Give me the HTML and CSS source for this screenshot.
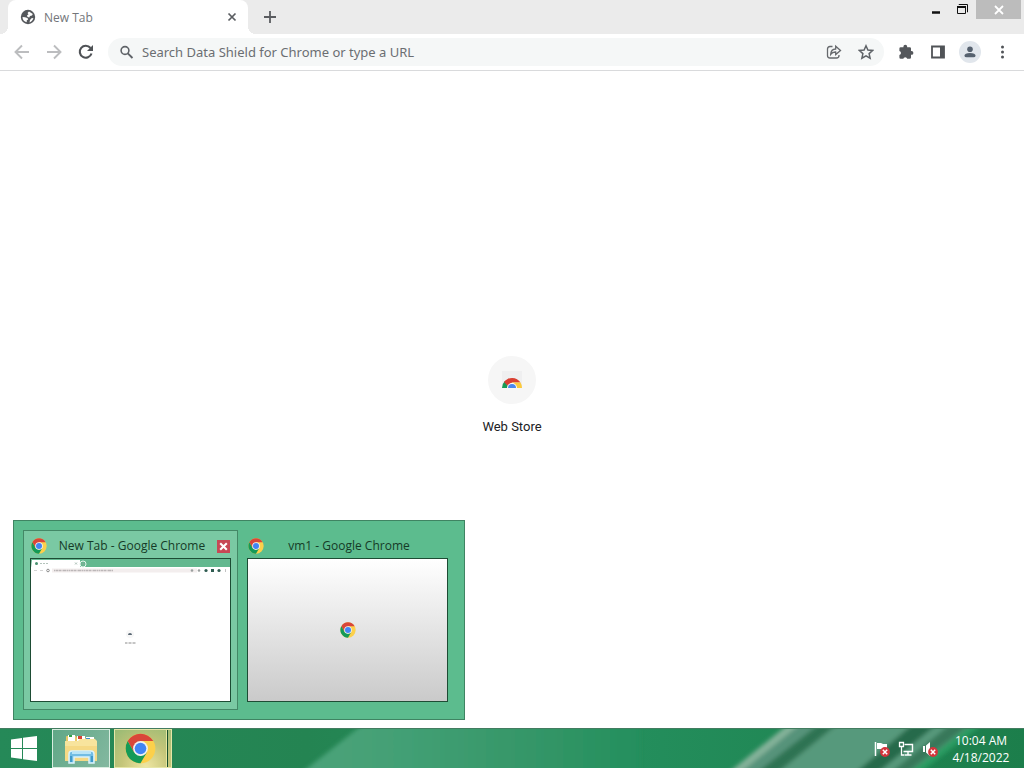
FILE: index.html
```html
<!DOCTYPE html>
<html lang="en">
<head>
<meta charset="utf-8">
<meta name="viewport" content="width=device-width, initial-scale=1">
<title>New Tab</title>
<link rel="stylesheet" href="styles.css">
</head>
<body>
<svg class="defs" aria-hidden="true">
  <symbol id="chrome" viewBox="0 0 48 48">
    <circle cx="24" cy="24" r="23" fill="#fcd04b"/>
    <path d="M4.100 12.500A23 23 0 0 1 43.900 12.500H24L14 29.700Z" fill="#d9463a"/>
    <path d="M4.100 12.500 14 29.700 24 35.500 34 29.700 24 47A23 23 0 0 1 4.100 12.500Z" fill="#149a57"/>
    <circle cx="24" cy="24" r="11.500" fill="#f1f1f1"/>
    <circle cx="24" cy="24" r="9" fill="#4285f4"/>
  </symbol>
  <symbol id="error" viewBox="0 0 10 10">
    <circle cx="5" cy="5" r="4.900" fill="#d3353c"/>
    <path d="m2.800 2.800 4.400 4.400M7.200 2.800 2.800 7.200" stroke="#fff" stroke-width="1.500"/>
  </symbol>
</svg>

<header class="browser">
  <div class="tabstrip">
    <div class="tab">
      <svg class="tab-icon" viewBox="0 0 16 16"><circle cx="8" cy="8" r="7.200" fill="#55585c"/><path d="M9 2.500 12.800 5 12 6.500 10 7 9.300 8.500 7.500 8 7 6.500 8.500 5.200 7.500 4Z" fill="#fff"/><path d="M2.500 8 5 8.300 7.500 9 8.200 10.500 6.800 11.300 6.700 13.300C4.200 12.700 2.500 10.700 2.500 8ZM10 11 11.500 9.300 13.400 9C12.900 11.200 11.500 12.800 9.500 13.400Z" fill="#fff"/></svg>
      <span class="tab-title">New Tab</span>
      <button class="icon-btn tab-close" aria-label="Close tab"><svg viewBox="0 0 10 10"><path d="m1.500 1.500 7 7M8.500 1.500 1.500 8.500" stroke="#5a5d61" stroke-width="1.700"/></svg></button>
    </div>
    <button class="icon-btn new-tab" aria-label="Open new tab"><svg viewBox="0 0 12 12"><path d="M6 0v12M0 6h12" stroke="#5a5c60" stroke-width="1.800"/></svg></button>
    <div class="window-controls">
      <button class="icon-btn minimize" aria-label="Minimize"><svg viewBox="0 0 12 12"><path d="M1 8.500h8" stroke="#111" stroke-width="2.500"/></svg></button>
      <button class="icon-btn restore" aria-label="Restore"><svg viewBox="0 0 12 12"><path d="M2 1V.5h8.500V8H10" fill="none" stroke="#111"/><path d="M.5 2.500h8v7h-8Z" fill="none" stroke="#111"/><path d="M0 3h9" stroke="#111" stroke-width="2"/></svg></button>
      <button class="icon-btn window-close" aria-label="Close window"><svg viewBox="0 0 10 10"><path d="m1 1 8 8M9 1 1 9" stroke="#fff" stroke-width="1.800"/></svg></button>
    </div>
  </div>
  <div class="toolbar">
    <button class="icon-btn tool" aria-label="Back"><svg viewBox="0 0 16 16"><path d="M15 8H2M8 1.500 1.500 8 8 14.500" fill="none" stroke="#bcbdbf" stroke-width="1.900"/></svg></button>
    <button class="icon-btn tool" aria-label="Forward"><svg viewBox="0 0 16 16"><path d="M1 8h13M8 1.500 14.500 8 8 14.500" fill="none" stroke="#bcbdbf" stroke-width="1.900"/></svg></button>
    <button class="icon-btn tool" aria-label="Reload"><svg viewBox="0 0 16 16"><path d="M13.500 9.500A6 6 0 1 1 12.500 4" fill="none" stroke="#4f5256" stroke-width="2.100"/><path d="M15 1v6H9Z" fill="#4f5256"/></svg></button>
    <div class="omnibox">
      <svg class="search-icon" viewBox="0 0 14 14"><circle cx="5" cy="5.500" r="3.900" fill="none" stroke="#5f6368" stroke-width="1.600"/><path d="m7.800 8.300 4.700 4.700" stroke="#5f6368" stroke-width="1.900"/></svg>
      <input class="address" type="text" aria-label="Address and search bar" placeholder="Search Data Shield for Chrome or type a URL">
      <button class="icon-btn tool" aria-label="Share"><svg viewBox="0 0 16 16"><path d="M6.500 2.500H4Q1.500 2.500 1.500 5v6.500Q1.500 14 4 14h6.500q2.500 0 2.500-2.500V11M4.700 10.300Q5 5.200 9.700 5V2.300L14.500 6.500 9.700 10.500V8Q6.500 7.800 4.700 10.300Z" fill="none" stroke="#66696d" stroke-width="1.300"/></svg></button>
      <button class="icon-btn tool" aria-label="Bookmark this tab"><svg viewBox="0 0 16 16"><path d="m8 1.800 1.900 4.300 4.700.4-3.500 3.100 1 4.600L8 11.800l-4.100 2.400 1-4.600L1.400 6.500l4.700-.4Z" fill="none" stroke="#5f6368" stroke-width="1.500"/></svg></button>
    </div>
    <button class="icon-btn tool" aria-label="Extensions"><svg viewBox="0 0 16 16"><path d="M5.400 3.200V2.700a1.900 1.900 0 0 1 3.800 0v.5h2.500q1.300 0 1.300 1.300V7h.5a1.900 1.900 0 0 1 0 3.800H13v2.600q0 1.300-1.300 1.300H9.200a2 2 0 0 0-3.900 0H2.700q-1.300 0-1.300-1.300V11a2.050 2.050 0 0 0 0-4V4.500q0-1.300 1.300-1.300Z" fill="#54575b"/></svg></button>
    <button class="icon-btn tool" aria-label="Side panel"><svg viewBox="0 0 16 16"><path d="M2 2.500h12v11H2Z" fill="#fff" stroke="#505357" stroke-width="1.800"/><path d="M10 2h4v12h-4Z" fill="#505357"/></svg></button>
    <button class="icon-btn tool profile" aria-label="Profile"><svg viewBox="0 0 16 16"><circle cx="8" cy="4.800" r="3.200" fill="#56616f"/><path d="M1.500 14v-1.500Q1.800 9.300 8 9.200q6.200.1 6.500 3.300V14Z" fill="#56616f"/></svg></button>
    <button class="icon-btn tool" aria-label="Menu"><svg viewBox="0 0 16 16"><g fill="#505357"><circle cx="8.500" cy="3" r="1.500"/><circle cx="8.500" cy="8" r="1.500"/><circle cx="8.500" cy="13" r="1.500"/></g></svg></button>
  </div>
</header>

<main class="page">
  <a class="shortcut" href="#">
    <span class="shortcut-icon"><svg viewBox="0 0 24 24"><path d="M2 3h20v17H2Z" fill="#efeff0"/><path d="M2 20a10 10 0 0 1 2.800-7L9 20Z" fill="#169b55"/><path d="M4 14A10 10 0 0 1 20.500 14.500H12L8 18Z" fill="#d93f32"/><path d="M12 14.500h8.500A10 10 0 0 1 22 20h-6Z" fill="#fbc93d"/><path d="M7 20a5 5 0 0 1 10 0Z" fill="#fff"/><path d="M8 20a4 4 0 0 1 8 0Z" fill="#4b87ee"/></svg></span>
    <span class="shortcut-label">Web Store</span>
  </a>
</main>

<footer class="taskbar">
  <svg class="wallpaper" viewBox="0 0 1024 40" preserveAspectRatio="none" aria-hidden="true">
    <defs>
      <linearGradient id="base"><stop offset="0" stop-color="#258958"/><stop offset=".3" stop-color="#248452"/><stop offset=".6" stop-color="#248f5d"/><stop offset="1" stop-color="#1c7e4b"/></linearGradient>
      <linearGradient id="beam"><stop offset="0" stop-color="#4da37a"/><stop offset=".3" stop-color="#43a075"/><stop offset=".65" stop-color="#369769"/><stop offset="1" stop-color="#248f5d"/></linearGradient>
      <filter id="soft" x="-5%" y="-50%" width="110%" height="200%"><feGaussianBlur stdDeviation="2"/></filter>
    </defs>
    <path d="M0 0h1024v40H0Z" fill="url(#base)"/>
    <g filter="url(#soft)">
      <path d="M371-10h269v60H295Z" fill="url(#beam)"/>
      <path d="M802-10h188l-84 60H726Z" fill="#57997c"/>
      <path d="M796-10h12l-74 60h-12Z" fill="#84b29a"/>
      <path d="M808-10h17l-74 60h-17Z" fill="#56937a"/>
      <path d="M827-10h18l-74 60h-21Z" fill="#2e7352"/>
      <path d="M920-10h25l-74 60h-22Z" fill="#286b4c"/>
      <path d="M958-10h20l-78 60h-16Z" fill="#38785a"/>
      <path d="M980-10h11l-78 60h-11Z" fill="#299b62"/>
    </g>
    <path d="M0 .5h1024" stroke="#437c60"/>
  </svg>
  <button class="start" aria-label="Start"><svg viewBox="0 0 26 25"><path d="m0 3.500 11-1.600v10.100H0ZM12 1.800 26 0v12H12ZM0 13h11v10L0 21.500ZM12 13h14v12l-14-1.800Z" fill="#fff"/></svg></button>
  <button class="task explorer" aria-label="File Explorer">
    <svg viewBox="0 0 34 30"><path d="M2 3q0-1 1-1h9l1 2h16q2 0 2 2v19H2Z" fill="#e9c867"/><path d="M4 1h7v6H4ZM13 2h8v6h-8ZM22 3h8v5h-8Z" fill="#fff"/><path d="M5 1h3v2H5Z" fill="#35a347"/><path d="M14 2h4v3h-4Z" fill="#d84132"/><path d="M22 4h4v2h-4Z" fill="#3c8fd1"/><path d="M1 7h13l2-2h15l2 2v20H1Z" fill="#f8e49d"/><path d="M1 12h32v15H1Z" fill="#f5d985"/><path d="M5 20q0-3 3-3h19q3 0 3 3v9h-5v-6H10v6H5Z" fill="#72bde4" stroke="#d9f2fc" stroke-width="1.500"/><path d="M8 19h19" stroke="#b9e5f7" stroke-width="2"/><path d="M7 22v6M28 22v6" stroke="#318dc1" stroke-width="1.500"/></svg>
  </button>
  <button class="task chrome-task" aria-label="Google Chrome, 2 windows"><svg viewBox="0 0 48 48"><use href="#chrome"/></svg></button>
  <div class="tray">
    <button class="icon-btn tray-btn" aria-label="Action Center"><svg viewBox="0 0 16 16"><path d="M1.500 1v14" stroke="#fff" stroke-width="1.500"/><path d="M3 2h4l2 1h4v6H9L7 8H3Z" fill="#fff"/><use href="#error" x="6" y="6" width="10" height="10"/></svg></button>
    <button class="icon-btn tray-btn" aria-label="Network"><svg viewBox="0 0 16 16"><path d="M6.500 3.500h8v7h-9M10 11v3M6.500 14h7" fill="none" stroke="#fff" stroke-width="1.400"/><path d="M1.500 1.500h4v4h-4ZM3.500 6v8H6" fill="#36785a" stroke="#fff" stroke-width="1.300"/></svg></button>
    <button class="icon-btn tray-btn" aria-label="Volume muted"><svg viewBox="0 0 16 16"><path d="M1 5h2v6H1ZM4 4.500 8 1v14l-4-3.500Z" fill="#fff"/><use href="#error" x="6" y="6" width="10" height="10"/></svg></button>
  </div>
  <button class="clock"><time>10:04 AM</time><time>4/18/2022</time></button>

  <section class="previews" aria-label="Google Chrome windows">
    <article class="preview active">
      <div class="preview-head">
        <svg class="preview-icon"><use href="#chrome"/></svg>
        <span class="preview-title">New Tab - Google Chrome</span>
        <button class="icon-btn preview-close" aria-label="Close New Tab"><svg viewBox="0 0 10 10"><path d="m2 2 6 6M8 2 2 8" stroke="#fff" stroke-width="1.900"/></svg></button>
      </div>
      <div class="thumb">
        <svg viewBox="0 0 199 142" aria-hidden="true">
          <path d="M0 0h199v8H0Z" fill="#63b88f"/><path d="M1 1h48v8H0Z" fill="#fff"/><circle cx="52" cy="5" r="3" fill="#63b88f" stroke="#e4f4ec"/>
          <circle cx="5.500" cy="4.500" r="1.500" fill="#47906f"/><path d="M9 4.500h9" stroke="#b4c4bc" stroke-dasharray="2 1"/><path d="m44 3.500 2 2m0-2-2 2M50.500 5h3M52 3.500v3" stroke="#91aa9d" stroke-width=".7"/>
          <path d="M21 11.500h145" stroke="#f3eeee" stroke-width="4"/>
          <path d="M3 11.500h3M9 11.500h3" stroke="#d3d3d3"/><circle cx="17" cy="11.500" r="1.300" fill="none" stroke="#8b8b8b"/>
          <path d="M23 11.500h59" stroke="#bcb7b8" stroke-width="1.500" stroke-dasharray="1 .5 3 .5 2 .5"/>
          <g fill="#9ba09f"><circle cx="161" cy="11.500" r="1.300"/><circle cx="168" cy="11.500" r="1.300"/></g><g fill="#2f5c51"><circle cx="175" cy="11.500" r="1.600"/><path d="M180 10h3v3h-3Z"/><circle cx="188" cy="11.500" r="1.600"/></g><path d="M194.500 10v3" stroke="#999" stroke-width=".6"/>
          <circle cx="99" cy="75" r="4" fill="#f7f7f7"/><path d="M97 76a2 2 0 0 1 4 0Z" fill="#596773"/><path d="M94 84h11" stroke="#8b8b8b" stroke-dasharray="2 .5 1 .5"/>
        </svg>
      </div>
    </article>
    <article class="preview">
      <div class="preview-head">
        <svg class="preview-icon"><use href="#chrome"/></svg>
        <span class="preview-title">vm1 - Google Chrome</span>
        <span class="preview-spacer"></span>
      </div>
      <div class="thumb blank"><svg class="thumb-logo"><use href="#chrome"/></svg></div>
    </article>
  </section>
</footer>
</body>
</html>
```

FILE: styles.css
```css
* { box-sizing: border-box; }

body {
  margin: 0;
  min-height: 100vh;
  display: flex;
  flex-direction: column;
  background: #fff;
  font-family: "Open Sans", "Noto Sans", sans-serif;
}

button { font: inherit; color: inherit; border: 0; padding: 0; background: none; }
svg { display: block; }
.defs { position: absolute; width: 0; height: 0; }

.icon-btn { display: flex; align-items: center; justify-content: center; flex: none; }

/* Tab strip */
.tabstrip { display: flex; height: 34px; padding-left: 8px; background: #ebebeb; }
.tab {
  position: relative;
  display: flex;
  align-items: center;
  gap: 8px;
  width: 240px;
  padding: 0 8px 0 12px;
  border-radius: 8px 8px 0 0;
  background: #fff;
}
.tab::before, .tab::after {
  content: "";
  position: absolute;
  bottom: 0;
  width: 8px;
  height: 8px;
}
.tab::before { right: 100%; background: radial-gradient(circle at 0 0, transparent 8px, #fff 8px); }
.tab::after { left: 100%; background: radial-gradient(circle at 100% 0, transparent 8px, #fff 8px); }
.tab-icon { width: 16px; height: 16px; }
.tab-title { flex: 1; font-size: 12px; color: #73767a; }
.tab-close { width: 16px; height: 16px; }
.tab-close svg { width: 10px; height: 10px; }
.new-tab { width: 28px; margin-left: 8px; }
.new-tab svg { width: 12px; height: 12px; }
.window-controls { display: flex; margin-left: auto; height: 19px; padding-right: 3px; }
.minimize, .restore { width: 26px; }
.minimize svg, .restore svg { width: 12px; height: 12px; }
.window-close { width: 45px; background: #bcbcbc; }
.window-close svg { width: 10px; height: 10px; }

/* Toolbar */
.toolbar {
  display: flex;
  align-items: center;
  gap: 4px;
  height: 37px;
  padding: 0 8px;
  border-bottom: 1px solid #d9dadc;
  background: #fff;
}
.tool { width: 28px; height: 28px; }
.tool svg { width: 16px; height: 16px; }
.omnibox {
  flex: 1;
  display: flex;
  align-items: center;
  gap: 4px;
  min-width: 0;
  height: 28px;
  margin: 0 4px;
  padding: 0 4px 0 12px;
  border-radius: 14px;
  background: #f5f7f7;
}
.search-icon { width: 14px; height: 14px; }
.address {
  flex: 1;
  min-width: 0;
  border: 0;
  padding: 0 4px;
  background: none;
  font: 13px/20px "Noto Sans", sans-serif;
}
.address::placeholder { color: #6b6e72; opacity: 1; }
.profile svg { width: 22px; height: 22px; padding: 4px; border-radius: 50%; background: #e1e6ec; }

/* New tab page */
.page {
  flex: 1;
  display: flex;
  align-items: center;
  justify-content: center;
  padding-bottom: 8px;
}
.shortcut {
  display: flex;
  flex-direction: column;
  align-items: center;
  gap: 14px;
  color: #202124;
  text-decoration: none;
}
.shortcut-icon {
  display: flex;
  align-items: center;
  justify-content: center;
  width: 48px;
  height: 48px;
  border-radius: 50%;
  background: #f6f6f6;
}
.shortcut-icon svg { width: 24px; height: 24px; }
.shortcut-label { font: 13px/18px Roboto, sans-serif; }

/* Taskbar */
.taskbar { position: relative; display: flex; height: 40px; }
.taskbar > button, .tray { position: relative; }
.wallpaper { position: absolute; inset: 0; width: 100%; height: 100%; }
.start { display: flex; align-items: center; justify-content: center; width: 48px; }
.start svg { width: 26px; height: 25px; }
.task {
  display: flex;
  align-items: center;
  justify-content: center;
  width: 58px;
  margin: 1px 0 0 4px;
  border: 1px solid #d8ede0;
}
.explorer { background: linear-gradient(120deg, #60a786, #83b8a0); }
.explorer svg { width: 34px; height: 30px; }
.chrome-task {
  padding-right: 5px;
  background:
    linear-gradient(#174f2c, #174f2c) right 3px top / 1px 100% no-repeat,
    linear-gradient(#e8e6a1, #e8e6a1) right 4px top / 1px 100% no-repeat,
    radial-gradient(circle at 55% 100%, #efe6a2, #c4c579 50%, #97ba74);
  border-color: #e6e6a8;
}
.chrome-task svg { width: 31px; height: 31px; }

.tray { display: flex; align-items: center; gap: 8px; margin-left: auto; padding-top: 2px; }
.tray-btn svg { width: 16px; height: 16px; }
.clock {
  display: flex;
  flex-direction: column;
  align-items: center;
  justify-content: center;
  width: 86px;
  padding-top: 2px;
  color: #fff;
  font-size: 12px;
  line-height: 17px;
}

/* Window previews */
.previews {
  position: absolute;
  left: 13px;
  bottom: 48px;
  display: flex;
  gap: 2px;
  padding: 9px;
  border: 1px solid #3f8462;
  background: #5cbc8e;
}
.preview { width: 215px; padding: 0 6px 7px; border: 1px solid transparent; }
.preview.active { border-color: #438866; background: #7ac9a3; }
.preview-head { display: flex; align-items: center; height: 27px; padding: 3px 1px 0; }
.preview-icon { width: 16px; height: 16px; }
.preview-title { flex: 1; text-align: center; font-size: 12px; line-height: 16px; color: #153b27; }
.preview-close, .preview-spacer { width: 13px; height: 13px; }
.preview-close { background: #c74855; }
.preview-close svg { width: 11px; height: 11px; }
.thumb { border: 1px solid #1d4c34; background: #fff; }
.thumb svg { width: 100%; }
.blank {
  display: flex;
  align-items: center;
  justify-content: center;
  height: 144px;
  background: linear-gradient(#fff, #cacaca);
}
.blank .thumb-logo { width: 16px; height: 16px; }
```
